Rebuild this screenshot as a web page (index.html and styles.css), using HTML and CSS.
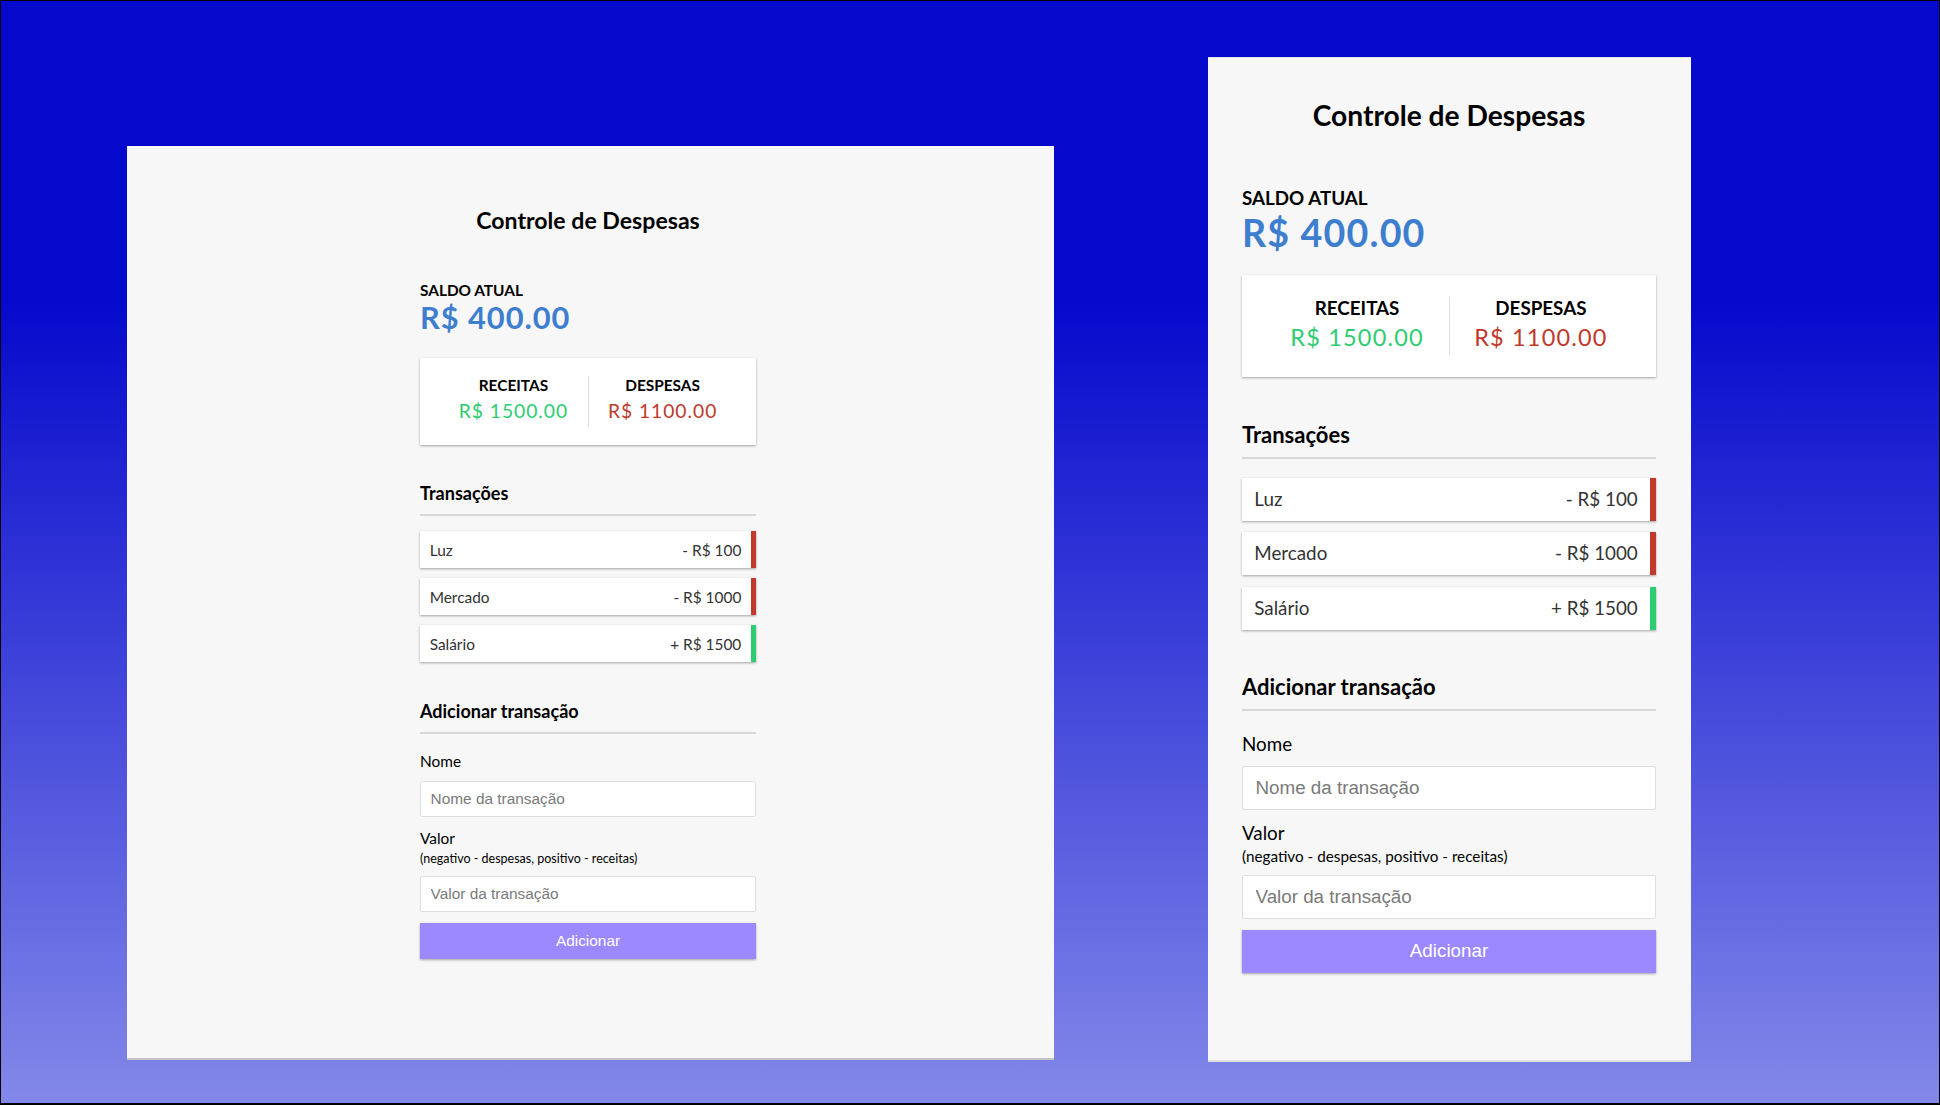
FILE: index.html
```html
<!DOCTYPE html>
<html lang="pt-BR">
<head>
<meta charset="utf-8">
<title>Controle de Despesas</title>
<link rel="stylesheet" href="styles.css">
</head>
<body>
<div class="stage">
  <section class="phone phone-left">
    <div class="app">
      <h2 class="title">Controle de Despesas</h2>
      <h4 class="caption">Saldo atual</h4>
      <h1 class="balance">R$ 400.00</h1>
      <div class="inc-exp">
        <div class="inc-exp-col">
          <h4 class="caption">Receitas</h4>
          <p class="money plus">R$ 1500.00</p>
        </div>
        <div class="inc-exp-col">
          <h4 class="caption">Despesas</h4>
          <p class="money minus">R$ 1100.00</p>
        </div>
      </div>
      <h3 class="section-title first">Transações</h3>
      <ul class="list">
        <li class="item minus"><span>Luz</span><span>- R$ 100</span></li>
        <li class="item minus"><span>Mercado</span><span>- R$ 1000</span></li>
        <li class="item plus"><span>Salário</span><span>+ R$ 1500</span></li>
      </ul>
      <h3 class="section-title second">Adicionar transação</h3>
      <form class="form">
        <label class="label label-name">Nome</label>
        <input class="field" type="text" placeholder="Nome da transação">
        <label class="label label-value">Valor <br><small class="hint">(negativo - despesas, positivo - receitas)</small></label>
        <input class="field field-2" type="number" placeholder="Valor da transação">
        <button class="btn" type="button">Adicionar</button>
      </form>
    </div>
  </section>

  <section class="phone phone-right">
    <div class="app">
      <h2 class="title">Controle de Despesas</h2>
      <h4 class="caption">Saldo atual</h4>
      <h1 class="balance">R$ 400.00</h1>
      <div class="inc-exp">
        <div class="inc-exp-col">
          <h4 class="caption">Receitas</h4>
          <p class="money plus">R$ 1500.00</p>
        </div>
        <div class="inc-exp-col">
          <h4 class="caption">Despesas</h4>
          <p class="money minus">R$ 1100.00</p>
        </div>
      </div>
      <h3 class="section-title first">Transações</h3>
      <ul class="list">
        <li class="item minus"><span>Luz</span><span>- R$ 100</span></li>
        <li class="item minus"><span>Mercado</span><span>- R$ 1000</span></li>
        <li class="item plus"><span>Salário</span><span>+ R$ 1500</span></li>
      </ul>
      <h3 class="section-title second">Adicionar transação</h3>
      <form class="form">
        <label class="label label-name">Nome</label>
        <input class="field" type="text" placeholder="Nome da transação">
        <label class="label label-value">Valor <br><small class="hint">(negativo - despesas, positivo - receitas)</small></label>
        <input class="field field-2" type="number" placeholder="Valor da transação">
        <button class="btn" type="button">Adicionar</button>
      </form>
    </div>
  </section>
</div>
</body>
</html>
```

FILE: styles.css
```css
* { box-sizing: border-box; }

html, body {
  margin: 0;
  padding: 0;
}

body {
  width: 1940px;
  height: 1105px;
  overflow: hidden;
  font-family: "Lato", "Open Sans", sans-serif;
}

.stage {
  width: 1940px;
  height: 1105px;
  border: 1px solid #000;
  border-bottom-width: 2px;
  background: linear-gradient(180deg, #0509cc 0%, #0509cc 27%, #8388e9 100%);
  display: flex;
  align-items: flex-start;
  padding-left: 126px;
  gap: 154px;
}

.phone {
  background: #f7f7f7;
  flex: none;
}

.phone-left {
  width: 927px;
  height: 912px;
  margin-top: 145px;
  box-shadow: 0 2px 0 #c4c4c4;
  --f: 0.963;
  --w: 336px;
  --app-ml: 293px;
  --pad-top: 61px;
  --g-title: 46.6px;
  --g-card: 21px;
  --card-py: 18.7px;
  --card-px: 19.3px;
  --money-my: 4.3px;
  --g-h3a: 37.2px;
  --h3-pb: 10px;
  --h3-pb2: 9px;
  --g-list: 15.2px;
  --li-py: 9.25px;
  --li-px: 9.7px;
  --li-gap: 10px;
  --li-bw: 5px;
  --g-h3b: 39.2px;
  --g-label: 17.7px;
  --g-input: 10.7px;
  --input-h: 36px;
  --input-px: 9.6px;
  --g-valor: 12.1px;
  --g-input2: 9.9px;
  --g-btn: 11.3px;
  --btn-h: 36px;
}

.phone-right {
  width: 483px;
  height: 1002px;
  margin-top: 57px;
  box-shadow: 0 2px 0 #e0e0e0, 0 -1px 0 #e6e6e6;
  --f: 1.175;
  --w: 414px;
  --app-ml: 34px;
  --pad-top: 41.2px;
  --g-title: 54px;
  --g-card: 20.3px;
  --card-py: 22px;
  --card-px: 23.7px;
  --money-my: 3.5px;
  --g-h3a: 44.8px;
  --h3-pb: 9.3px;
  --h3-pb2: 8.6px;
  --g-list: 18.3px;
  --li-py: 10.3px;
  --li-px: 12.3px;
  --li-gap: 11.5px;
  --li-bw: 6px;
  --g-h3b: 44.1px;
  --g-label: 22.3px;
  --g-input: 10.3px;
  --input-h: 43.7px;
  --input-px: 12.5px;
  --g-valor: 12px;
  --g-input2: 8.1px;
  --g-btn: 11px;
  --btn-h: 43px;
}

.app {
  width: var(--w);
  margin-left: var(--app-ml);
  padding-top: var(--pad-top);
  display: flex;
  flex-direction: column;
  color: #000;
  line-height: 1.2;
}

.title {
  margin: 0;
  font-size: calc(var(--f) * 24px);
  font-weight: 700;
  text-align: center;
  line-height: 1.2;
}

.caption {
  margin: 0;
  font-size: calc(var(--f) * 16px);
  font-weight: 700;
  text-transform: uppercase;
  line-height: 1.2;
}

.title + .caption {
  margin-top: var(--g-title);
}

.balance {
  margin: 0;
  font-size: calc(var(--f) * 32px);
  font-weight: 700;
  letter-spacing: calc(var(--f) * 1px);
  color: #3d7ecf;
  line-height: 1.2;
}

.inc-exp {
  margin-top: var(--g-card);
  background: #fff;
  box-shadow: 0 1px 3px rgba(0, 0, 0, 0.12), 0 1px 2px rgba(0, 0, 0, 0.24);
  padding: var(--card-py) var(--card-px);
  display: flex;
}

.inc-exp-col {
  flex: 1;
  text-align: center;
}

.inc-exp-col:first-child {
  border-right: 1px solid #dedede;
}

.money {
  margin: var(--money-my) 0;
  font-size: calc(var(--f) * 20px);
  letter-spacing: calc(var(--f) * 1px);
  line-height: 1.2;
}

.money.plus { color: #2ecc71; }
.money.minus { color: #c0392b; }

.section-title {
  margin: 0;
  font-size: calc(var(--f) * 18.72px);
  font-weight: 700;
  line-height: 1.2;
  border-bottom: 2px solid #d8d8d8;
}

.section-title.first {
  margin-top: var(--g-h3a);
  padding-bottom: var(--h3-pb);
}

.section-title.second {
  margin-top: var(--g-h3b);
  padding-bottom: var(--h3-pb2);
}

.list {
  list-style: none;
  margin: var(--g-list) 0 0;
  padding: 0;
  display: flex;
  flex-direction: column;
  gap: var(--li-gap);
}

.item {
  background: #fff;
  color: #333;
  box-shadow: 0 1px 3px rgba(0, 0, 0, 0.12), 0 1px 2px rgba(0, 0, 0, 0.24);
  display: flex;
  justify-content: space-between;
  padding: var(--li-py) var(--li-px);
  font-size: calc(var(--f) * 16px);
  line-height: 1.2;
}

.item.minus { border-right: var(--li-bw) solid #c0392b; }
.item.plus { border-right: var(--li-bw) solid #2ecc71; }

.form {
  display: flex;
  flex-direction: column;
  margin: 0;
}

.label {
  display: block;
  font-size: calc(var(--f) * 16px);
  line-height: 1.2;
  color: #000;
}

.label-name { margin-top: var(--g-label); }
.label-value { margin-top: var(--g-valor); }

.hint {
  font-size: calc(var(--f) * 13px);
}

.field {
  display: block;
  width: 100%;
  height: var(--input-h);
  margin: var(--g-input) 0 0;
  border: 1px solid #dedede;
  border-radius: 2px;
  background: #fff;
  padding: 0 var(--input-px);
  font-family: "Liberation Sans", Arial, sans-serif;
  font-size: calc(var(--f) * 16px);
  color: #333;
  outline: none;
}

.field-2 { margin-top: var(--g-input2); }

.field::placeholder {
  color: #7a7a7a;
}

.field::-webkit-outer-spin-button,
.field::-webkit-inner-spin-button {
  -webkit-appearance: none;
  margin: 0;
}

.btn {
  display: block;
  width: 100%;
  height: var(--btn-h);
  margin-top: var(--g-btn);
  border: 0;
  background: #9c88ff;
  color: #fff;
  box-shadow: 0 1px 3px rgba(0, 0, 0, 0.12), 0 1px 2px rgba(0, 0, 0, 0.24);
  font-family: "Liberation Sans", Arial, sans-serif;
  font-size: calc(var(--f) * 16px);
  padding: 0;
  cursor: pointer;
}
```
